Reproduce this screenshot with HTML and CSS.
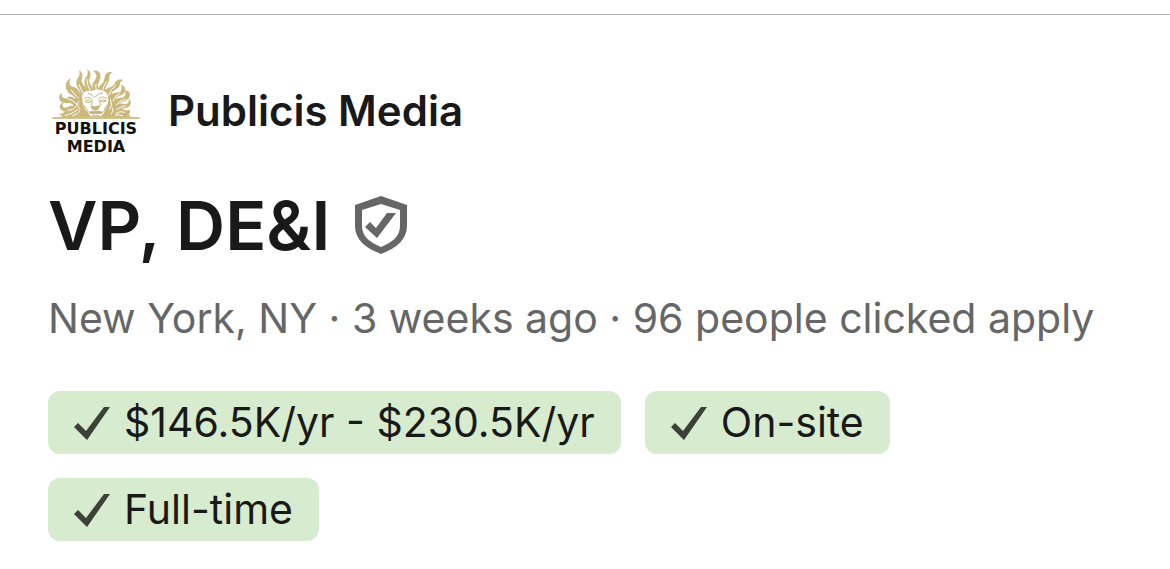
FILE: index.html
```html
<!DOCTYPE html>
<html lang="en">
<head>
<meta charset="UTF-8">
<meta name="viewport" content="width=device-width, initial-scale=1.0">
<title>VP, DE&amp;I - Publicis Media</title>
<link rel="stylesheet" href="styles.css">
</head>
<body>
<main class="job">
  <div class="company">
    <div class="logo">
      <svg class="sun" viewBox="37 34 264 156" aria-hidden="true">
        <g class="rays">
          <path d="M64 184Q84 160 100 150Q104 124 122 114Q136 94 166 98Q196 92 212 112Q232 126 234 148Q254 162 274 184Z"/>
          <path d="M98 184C82 172 72 186 56 176C72 178 76 160 94 162L112 168Z"/>
          <path d="M98 166C82 172 62 170 60 152C62 144 66 140 72 142C64 150 72 160 84 154C92 148 98 150 106 152Z"/>
          <path d="M104 150C88 134 76 150 62 136C56 126 58 116 68 112C62 126 76 132 84 124C94 118 106 128 114 136Z"/>
          <path d="M110 134C102 114 88 120 82 104C74 90 80 72 94 68C84 84 92 94 102 94C114 96 118 108 126 120Z"/>
          <path d="M122 122C126 102 108 96 110 78C112 64 124 64 118 44C136 54 124 70 126 78C130 90 142 90 144 110Z"/>
          <path d="M140 110C142 94 130 84 136 70C142 60 148 54 142 40C160 52 150 66 148 74C148 84 158 88 158 104Z"/>
          <path d="M160 104C154 86 164 76 168 70C174 58 166 50 160 46C176 40 186 54 182 68C178 80 172 86 178 102Z"/>
          <path d="M176 104C176 88 194 82 194 70C196 58 200 46 218 50C204 58 212 70 206 80C202 90 194 96 196 110Z"/>
          <path d="M194 112C200 92 216 98 224 86C228 74 238 66 252 74C238 76 244 86 236 96C226 104 218 102 212 124Z"/>
          <path d="M210 124C220 104 234 116 244 106C246 96 248 90 242 86C258 90 260 106 252 114C240 124 228 118 224 138Z"/>
          <path d="M222 138C232 120 246 132 254 122C262 112 256 106 248 108C264 98 276 112 268 126C256 142 242 134 232 150Z"/>
          <path d="M228 152C240 136 250 148 262 144C268 138 270 134 266 128C278 136 274 152 262 156C250 160 244 154 236 164Z"/>
          <path d="M230 168C244 154 254 168 270 162C276 172 258 178 274 182L242 184Z"/>
        </g>
        <g class="curls">
          <path d="M76 180Q98 176 116 160M84 164Q102 164 110 150M78 126Q98 132 112 146M94 102Q104 118 118 128M118 86Q124 102 132 116M142 70Q142 90 152 104M170 84Q166 92 170 102M200 78Q190 96 188 106M230 88Q214 98 206 120M242 114Q228 116 220 136M258 130Q238 134 228 150M258 150Q240 154 230 162M256 170Q240 164 228 174M250 181Q234 174 226 180"/>
          <path d="M98 180Q116 176 120 164M118 136Q108 150 122 160M212 130Q220 148 210 162M214 176Q224 166 218 156"/>
        </g>
        <path class="face" d="M128 120C132 106 144 104 156 106C166 98 190 100 200 112C208 122 206 138 204 146C202 156 196 162 194 170L184 182H152L144 168C134 162 126 138 128 120Z"/>
        <g class="lines">
          <path d="M132 132Q144 118 158 132L156 148M176 130Q188 118 202 130M178 132L184 150M136 138Q148 128 154 138Q144 144 136 138M182 136Q190 128 200 136Q190 142 182 136M132 150Q142 158 146 168M204 146Q194 158 192 168M144 112Q158 116 164 126Q176 112 190 112"/>
          <path class="shade" d="M154 150L166 154L180 150L176 160L168 164L158 160Z"/>
          <path class="shade" d="M148 170Q158 164 168 168Q180 164 190 170L182 174Q168 172 156 174Z"/>
          <path d="M156 181Q168 176 180 181"/>
        </g>
        <path class="ground" d="M38 187H300"/>
      </svg>
      <span class="logo-text">PUBLICIS<br>MEDIA</span>
    </div>
    <span class="company-name">Publicis Media</span>
  </div>

  <div class="title-row">
    <h1 class="title">VP, DE&amp;I</h1>
    <svg class="shield" viewBox="0 0 54 60" role="img" aria-label="Verified">
      <path class="shield-shape" fill-rule="evenodd" d="M27 1L53 10V31C53 44 43 53 27 59C11 53 1 44 1 31V10ZM27 9L8 15V31C8 41 15 47 27 52C39 47 46 41 46 31V15Z"/>
      <path class="shield-shape" d="M11 32L16 27L22 33L33 18H42L23 43Z"/>
    </svg>
  </div>

  <p class="details">New York, NY · 3 weeks ago · 96 people clicked apply</p>

  <ul class="tags">
    <li class="tag">
      <svg class="check" viewBox="0 0 36 34" aria-hidden="true"><path d="M0 21L4 17L12 25L30 1H36L13 34Z"/></svg>
      $146.5K/yr - $230.5K/yr
    </li>
    <li class="tag">
      <svg class="check" viewBox="0 0 36 34" aria-hidden="true"><path d="M0 21L4 17L12 25L30 1H36L13 34Z"/></svg>
      On-site
    </li>
    <li class="tag">
      <svg class="check" viewBox="0 0 36 34" aria-hidden="true"><path d="M0 21L4 17L12 25L30 1H36L13 34Z"/></svg>
      Full-time
    </li>
  </ul>
</main>
</body>
</html>
```
FILE: styles.css
```css
body {
  margin: 0;
  padding-top: 14px;
  background-color: #fff;
  color: #191919;
  font-family: Inter, sans-serif;
}

.job {
  border-top: 1px solid #b0b0b0;
  padding: 48px;
}

.company {
  display: flex;
  align-items: center;
  gap: 24px;
}

.logo {
  display: flex;
  flex-direction: column;
  align-items: center;
  width: 96px;
  height: 96px;
}

.sun {
  width: 88px;
  height: 52px;
  margin-top: 4px;
}

.rays {
  fill: #cbb97c;
}

.curls {
  fill: none;
  stroke: #fff;
  stroke-width: 3;
}

.face {
  fill: #fff;
}

.lines {
  fill: none;
  stroke: #c5b477;
  stroke-width: 3;
}

.lines .shade {
  fill: #c5b477;
}

.ground {
  stroke: #c0ad6c;
  stroke-width: 4;
}

.logo-text {
  margin-top: 1px;
  color: #111;
  font-family: "DejaVu Sans", sans-serif;
  font-size: 16px;
  font-weight: bold;
  line-height: 18px;
  text-align: center;
}

.company-name {
  font-size: 42px;
  font-weight: 600;
  line-height: 52px;
}

.title-row {
  display: flex;
  align-items: center;
  gap: 24px;
  margin-top: 20px;
}

.title {
  margin: 0;
  font-size: 68px;
  font-weight: 600;
  line-height: 92px;
}

.shield {
  width: 54px;
  height: 60px;
}

.shield-shape {
  fill: #666;
}

.details {
  margin: 20px 0 0;
  color: #666;
  font-size: 41px;
  line-height: 54px;
}

.tags {
  display: flex;
  flex-wrap: wrap;
  gap: 24px;
  margin: 46px 0 0;
  padding: 0;
  list-style: none;
}

/* the third tag drops to a second line */
.tag {
  display: flex;
  align-items: center;
  gap: 14px;
  padding: 0 26px;
  border-radius: 12px;
  background-color: #d7ebcf;
  font-size: 41px;
  line-height: 63px;
}

.check {
  width: 36px;
  height: 34px;
  fill: #3b4038;
}
```
